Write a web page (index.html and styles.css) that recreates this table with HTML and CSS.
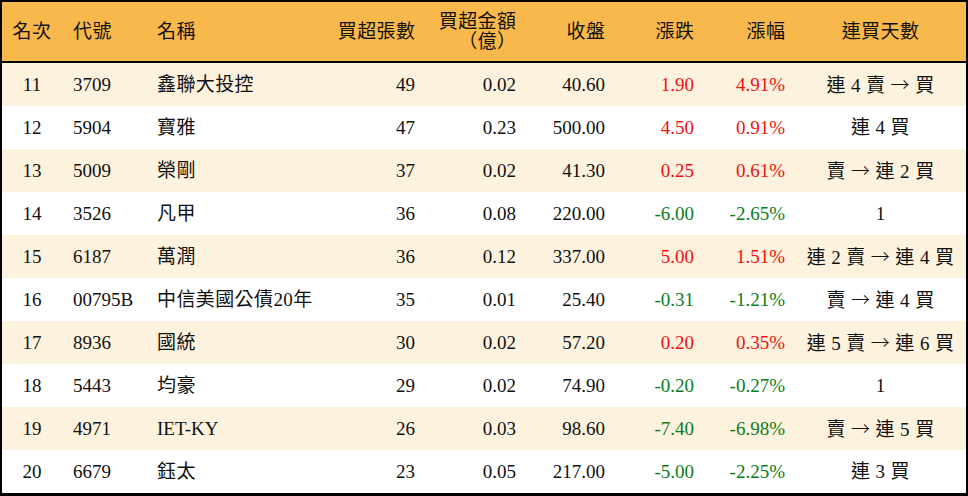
FILE: index.html
```html
<!DOCTYPE html>
<html lang="zh-Hant">
<head>
<meta charset="utf-8">
<title>買超排行</title>
<link rel="stylesheet" href="styles.css">
</head>
<body>
<div class="board">
  <div class="row head">
    <div class="c center zh">名次</div>
    <div class="c left code zh">代號</div>
    <div class="c left zh">名稱</div>
    <div class="c right zh">買超張數</div>
    <div class="c right zh two"><span>買超金額</span><span>（億）</span></div>
    <div class="c right zh">收盤</div>
    <div class="c right zh">漲跌</div>
    <div class="c right zh">漲幅</div>
    <div class="c center zh">連買天數</div>
  </div>

  <div class="row odd">
    <div class="c center">11</div><div class="c left code">3709</div><div class="c left zh">鑫聯大投控</div>
    <div class="c right">49</div><div class="c right">0.02</div><div class="c right">40.60</div>
    <div class="c right up">1.90</div><div class="c right up">4.91%</div>
    <div class="c center zh">連 4 賣 <span class="arr">→</span> 買</div>
  </div>
  <div class="row">
    <div class="c center">12</div><div class="c left code">5904</div><div class="c left zh">寶雅</div>
    <div class="c right">47</div><div class="c right">0.23</div><div class="c right">500.00</div>
    <div class="c right up">4.50</div><div class="c right up">0.91%</div>
    <div class="c center zh">連 4 買</div>
  </div>
  <div class="row odd">
    <div class="c center">13</div><div class="c left code">5009</div><div class="c left zh">榮剛</div>
    <div class="c right">37</div><div class="c right">0.02</div><div class="c right">41.30</div>
    <div class="c right up">0.25</div><div class="c right up">0.61%</div>
    <div class="c center zh">賣 <span class="arr">→</span> 連 2 買</div>
  </div>
  <div class="row">
    <div class="c center">14</div><div class="c left code">3526</div><div class="c left zh">凡甲</div>
    <div class="c right">36</div><div class="c right">0.08</div><div class="c right">220.00</div>
    <div class="c right down">-6.00</div><div class="c right down">-2.65%</div>
    <div class="c center">1</div>
  </div>
  <div class="row odd">
    <div class="c center">15</div><div class="c left code">6187</div><div class="c left zh">萬潤</div>
    <div class="c right">36</div><div class="c right">0.12</div><div class="c right">337.00</div>
    <div class="c right up">5.00</div><div class="c right up">1.51%</div>
    <div class="c center zh">連 2 賣 <span class="arr">→</span> 連 4 買</div>
  </div>
  <div class="row">
    <div class="c center">16</div><div class="c left code">00795B</div><div class="c left zh">中信美國公債20年</div>
    <div class="c right">35</div><div class="c right">0.01</div><div class="c right">25.40</div>
    <div class="c right down">-0.31</div><div class="c right down">-1.21%</div>
    <div class="c center zh">賣 <span class="arr">→</span> 連 4 買</div>
  </div>
  <div class="row odd">
    <div class="c center">17</div><div class="c left code">8936</div><div class="c left zh">國統</div>
    <div class="c right">30</div><div class="c right">0.02</div><div class="c right">57.20</div>
    <div class="c right up">0.20</div><div class="c right up">0.35%</div>
    <div class="c center zh">連 5 賣 <span class="arr">→</span> 連 6 買</div>
  </div>
  <div class="row">
    <div class="c center">18</div><div class="c left code">5443</div><div class="c left zh">均豪</div>
    <div class="c right">29</div><div class="c right">0.02</div><div class="c right">74.90</div>
    <div class="c right down">-0.20</div><div class="c right down">-0.27%</div>
    <div class="c center">1</div>
  </div>
  <div class="row odd">
    <div class="c center">19</div><div class="c left code">4971</div><div class="c left">IET-KY</div>
    <div class="c right">26</div><div class="c right">0.03</div><div class="c right">98.60</div>
    <div class="c right down">-7.40</div><div class="c right down">-6.98%</div>
    <div class="c center zh">賣 <span class="arr">→</span> 連 5 買</div>
  </div>
  <div class="row">
    <div class="c center">20</div><div class="c left code">6679</div><div class="c left zh">鈺太</div>
    <div class="c right">23</div><div class="c right">0.05</div><div class="c right">217.00</div>
    <div class="c right down">-5.00</div><div class="c right down">-2.25%</div>
    <div class="c center zh">連 3 買</div>
  </div>
</div>
</body>
</html>
```

FILE: styles.css
```css
html, body {
  margin: 0;
  padding: 0;
  background: #ffffff;
}

body {
  font-family: "Liberation Serif", "Noto Sans CJK TC", serif;
  font-size: 19px;
  color: #111111;
}

.board {
  width: 964px;
  border: 2px solid #000000;
  border-bottom-width: 3px;
}

.row {
  display: grid;
  grid-template-columns: 60px 85px 178px 100px 101px 89px 89px 91px 171px;
  height: 43px;
  align-items: center;
  background: #ffffff;
}

.row.odd {
  background: #fdf2de;
}

.row.head {
  height: 59px;
  background: #f9b84b;
  border-bottom: 2px solid #000000;
}

.c {
  padding: 0 10px;
  white-space: nowrap;
  line-height: 20px;
}

.c.code {
  padding-left: 11px;
}

.center { text-align: center; }
.left { text-align: left; }
.right { text-align: right; }

.zh {
  letter-spacing: 0.4px;
}

.right.zh {
  margin-right: -0.4px;
}

.two {
  display: flex;
  flex-direction: column;
  align-items: flex-end;
}

.up { color: #f01010; }
.down { color: #0a7d1a; }

.arr {
  font-family: "Noto Sans CJK TC", sans-serif;
  font-weight: 300;
}
```
